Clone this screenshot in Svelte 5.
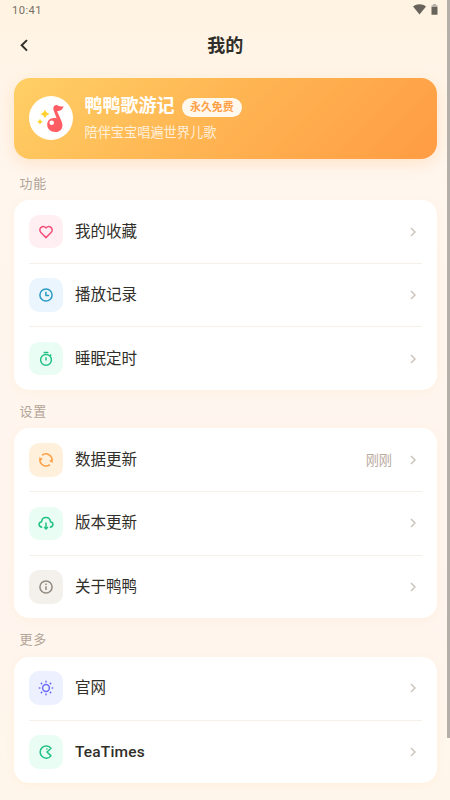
<script lang="ts">
  type Item = { label: string; icon: string; tint: string; color: string; value?: string; bold?: boolean };

  const groups: { title: string; items: Item[] }[] = [
    {
      title: '功能',
      items: [
        { label: '我的收藏', icon: 'heart', tint: '#ffeff3', color: '#f4517a' },
        { label: '播放记录', icon: 'clock', tint: '#eaf5fd', color: '#2b9bc4' },
        { label: '睡眠定时', icon: 'timer', tint: '#eafdf5', color: '#20c283' },
      ],
    },
    {
      title: '设置',
      items: [
        { label: '数据更新', icon: 'sync', tint: '#fff0dc', color: '#ff9f45', value: '刚刚' },
        { label: '版本更新', icon: 'cloud', tint: '#eafdf5', color: '#20c283' },
        { label: '关于鸭鸭', icon: 'info', tint: '#f4f1ec', color: '#928a80' },
      ],
    },
    {
      title: '更多',
      items: [
        { label: '官网', icon: 'sun', tint: '#ecf0ff', color: '#6c6cf5' },
        { label: 'TeaTimes', icon: 'moon', tint: '#eafdf5', color: '#20c283', bold: true },
      ],
    },
  ];
</script>

<div class="screen">
  <div class="status">
    <span>10:41</span>
    <div class="status-icons">
      <svg width="13" height="11" viewBox="0 0 13 11"><path d="M0 2.4C3.7-.6 9.3-.6 13 2.4L6.5 10.4z" fill="#68635b" /></svg>
      <svg width="7" height="11" viewBox="0 0 7 11">
        <path d="M2 0h3v1.2h1.5V3H.5V1.2H2z" fill="#b8b2a8" />
        <path d="M.5 3h6v7.2a.6.6 0 0 1-.6.6H1.1a.6.6 0 0 1-.6-.6z" fill="#68635b" />
      </svg>
    </div>
  </div>

  <header>
    <button class="back" aria-label="返回">
      <svg width="8" height="13" viewBox="0 0 8 13"><path d="M7 1.1 1.7 6.3 7 11.6" /></svg>
    </button>
    <h1>我的</h1>
  </header>

  <section class="hero">
    <div class="logo">
      <svg width="44" height="44" viewBox="0 0 44 44">
        <path d="M24.4 11.6c.5-2 2.4-3.2 4.3-2.2l1.7.9c1.4.3 2.7.1 4.2-.1-.6 2.6-2.3 4.3-5.3 4.7l-1.2.4 4.3 9.6c2.9 6.2-.4 11.1-6.2 11.1-4.6 0-8-3.1-8-7.2 0-4.7 3.6-7.7 9.4-6.5l-2.9-7.7c-.4-1.1-.5-2-.3-3z" fill="#ff5d64" />
        <circle cx="22.7" cy="26.8" r="2.3" fill="#fff" />
        <path d="M16 13.2q.8 3.7 4.7 4.8-3.9 1-4.7 4.8-.8-3.8-4.7-4.8 3.9-1.1 4.7-4.8zM11 22.7q.5 2.3 3 3-2.5.6-3 3-.5-2.4-3-3 2.5-.7 3-3z" fill="#ffd22e" />
      </svg>
    </div>
    <div class="hero-text">
      <div class="hero-title">
        <strong>鸭鸭歌游记</strong>
        <span class="badge">永久免费</span>
      </div>
      <p>陪伴宝宝唱遍世界儿歌</p>
    </div>
  </section>

  {#each groups as group}
    <h2>{group.title}</h2>
    <ul>
      {#each group.items as item}
        <li>
          <span class="tile" style:background={item.tint} style:color={item.color}>
            <svg class="icon" width="16" height="16" viewBox="0 0 16 16">
              {#if item.icon === 'heart'}
                <path d="M8 13.6 2.9 8.5C-.3 5.2 4.3.4 8 3.9c3.7-3.5 8.3 1.3 5.1 4.6z" />
              {:else if item.icon === 'clock'}
                <circle cx="8" cy="8" r="6.1" />
                <path d="M7.9 4.8v3.6h3.2" />
              {:else if item.icon === 'timer'}
                <circle cx="8" cy="8.9" r="5.4" />
                <path d="M5.6 1.5h4.8M8 6.2v3.2M12 4.6l1.2-1" />
              {:else if item.icon === 'sync'}
                <path d="M2.5 10.6A6.1 6.1 0 0 1 2 6.8M4.1 3.3a6.1 6.1 0 0 1 9.8 6M11.9 12.7a6.1 6.1 0 0 1-9.4-2.1" />
                <path class="solid" d="m1.2 5 3.6 1.9-2.9 2zM14.8 11l-3.6-1.9 2.9-2z" />
              {:else if item.icon === 'cloud'}
                <path d="M4.2 12.2C.2 12 .1 7.4 3.6 6.7c.5-5.5 8.3-5.5 8.8 0 3.5.7 3.4 5.3-.6 5.5M8 7.5v5.8" />
                <path d="m6.1 12 1.9 1.9L9.9 12" />
              {:else if item.icon === 'info'}
                <circle cx="8" cy="8" r="6.1" />
                <path d="M8 7.2v3.8M8 4.6v1.3" />
              {:else if item.icon === 'sun'}
                <circle cx="8" cy="8" r="3.4" />
                <path d="M8 .8v1.6M8 13.6v1.6M.8 8h1.6M13.6 8h1.6M2.9 2.9l1.2 1.2M11.9 11.9l1.2 1.2M13.1 2.9l-1.2 1.2M4.1 11.9l-1.2 1.2" />
              {:else}
                <path d="M13 4.3A6.1 6.1 0 1 0 13 11.9L9 8z" />
                <path d="M8.3 4.9h1.2" />
              {/if}
            </svg>
          </span>
          <span class="label" class:bold={item.bold}>{item.label}</span>
          {#if item.value}<span class="value">{item.value}</span>{/if}
          <svg class="chevron" width="6" height="10" viewBox="0 0 6 10"><path d="m1 1 4 4-4 4" /></svg>
        </li>
      {/each}
    </ul>
  {/each}

  <div class="scrollbar"></div>
</div>

<style>
  :global(body) {
    margin: 0;
  }

  .screen {
    position: relative;
    box-sizing: border-box;
    width: 450px;
    height: 800px;
    padding: 0 13.5px 0 14px;
    overflow: hidden;
    background: linear-gradient(#fff4e2, #fff4e7 9%, #fff6ee 23%, #fff5ee 75%, #fff6eb);
    color: #302e29;
    font-family: Roboto, "Noto Sans CJK SC", sans-serif;
  }

  .status {
    display: flex;
    justify-content: space-between;
    align-items: center;
    height: 20px;
    margin: 0 -1.5px 0 -2px;
    color: #777168;
    font-size: 11.2px;
    letter-spacing: 0.4px;
  }

  .status-icons {
    display: flex;
    gap: 5px;
    padding-bottom: 2px;
  }

  header {
    display: flex;
    align-items: center;
    height: 51px;
    margin-bottom: 6.5px;
  }

  .back {
    display: flex;
    width: 28px;
    padding: 0 0 0 6px;
    border: 0;
    background: none;
  }

  .back path {
    fill: none;
    stroke: #302e29;
    stroke-width: 2;
  }

  h1 {
    flex: 1;
    margin: 0 28px 0 0;
    font-size: 18px;
    line-height: 24px;
    font-weight: 700;
    text-align: center;
  }

  .hero {
    display: flex;
    align-items: center;
    box-sizing: border-box;
    height: 81.5px;
    padding: 0 15px;
    border-radius: 16px;
    background: linear-gradient(135deg, #ffd065, #ffb653 45%, #ff9c43);
    box-shadow: 0 5px 15px rgba(255, 159, 69, 0.2);
    color: #fff;
  }

  .logo {
    width: 44px;
    height: 44px;
    margin-right: 11.5px;
    border-radius: 50%;
    background: #fff;
  }

  .logo svg {
    display: block;
  }

  .hero-title {
    display: flex;
    align-items: center;
    gap: 7px;
    height: 26px;
  }

  .hero-title strong {
    font-size: 18px;
    font-weight: 700;
    line-height: 26px;
  }

  .badge {
    padding: 0 8.5px;
    margin-top: 3px;
    border-radius: 10px;
    background: #fff8ed;
    color: #ff9f45;
    font-size: 10.9px;
    font-weight: 700;
    line-height: 19px;
  }

  .hero p {
    margin: 3px 0 0;
    color: rgba(255, 255, 255, 0.8);
    font-size: 13.2px;
    line-height: 22px;
  }

  h2 {
    margin: 14.5px 0 6.5px 5.5px;
    color: #b3a598;
    font-size: 13px;
    font-weight: 400;
    line-height: 20px;
    letter-spacing: 0.8px;
  }

  ul + h2 {
    margin-top: 12px;
  }

  ul {
    margin: 0;
    padding: 0 15px;
    border-radius: 15px;
    background: #fff;
    box-shadow: 0 2px 10px rgba(255, 176, 90, 0.08);
    list-style: none;
  }

  li {
    display: flex;
    align-items: center;
    box-sizing: border-box;
    height: 63px;
  }

  li + li {
    height: 63.4px;
    border-top: 1px solid #f6f0ea;
  }

  .tile {
    display: flex;
    align-items: center;
    justify-content: center;
    width: 33.5px;
    height: 33.5px;
    margin-right: 12.5px;
    border-radius: 10px;
  }

  .icon {
    fill: none;
    stroke: currentColor;
    stroke-width: 1.5;
    stroke-linejoin: round;
  }

  .icon .solid {
    fill: currentColor;
    stroke: none;
  }

  .label {
    flex: 1;
    font-size: 15.5px;
    line-height: 24px;
  }

  .bold {
    font-weight: 500;
    letter-spacing: 0.15px;
  }

  .value {
    margin-right: 18px;
    color: #b9aa9e;
    font-size: 13.2px;
  }

  .chevron {
    margin-right: 5.5px;
    fill: none;
    stroke: #cbc4bc;
    stroke-width: 1.5;
  }

  .scrollbar {
    position: absolute;
    top: 0;
    right: 0;
    width: 2.6px;
    height: 738px;
    background: #b4afa8;
  }
</style>
